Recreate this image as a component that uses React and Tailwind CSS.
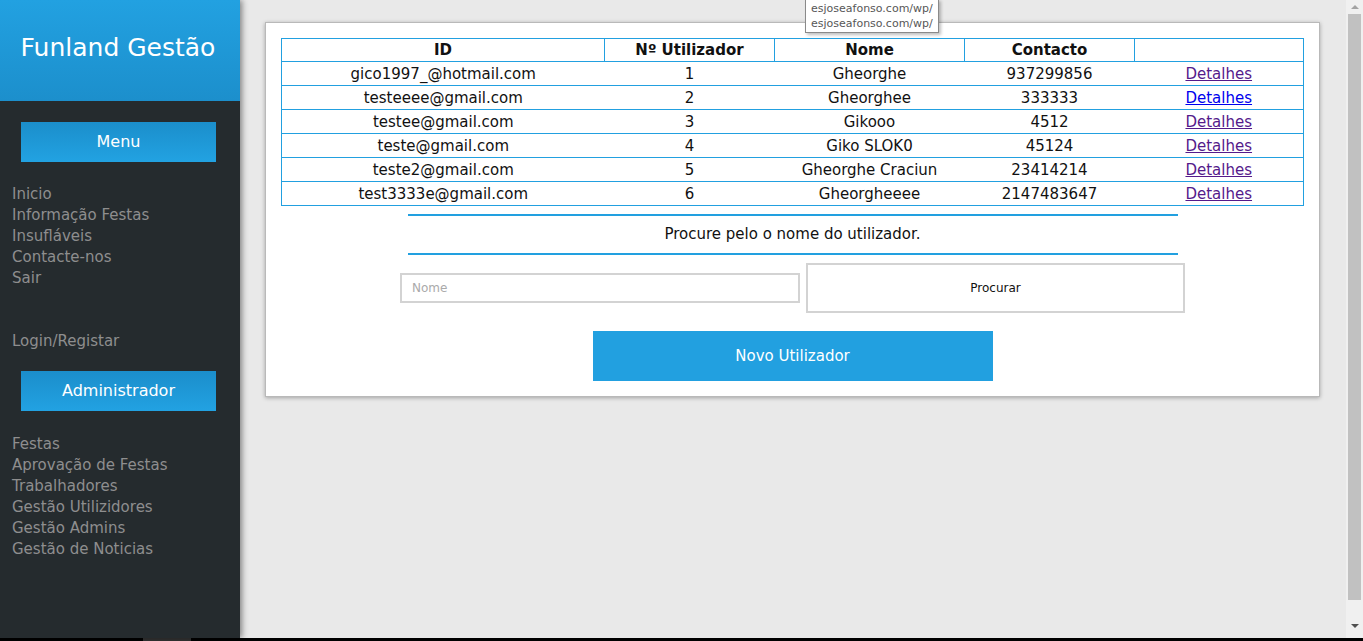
const menuLinks = ["Inicio", "Informação Festas", "Insufláveis", "Contacte-nos", "Sair"];
const adminLinks = [
  "Festas",
  "Aprovação de Festas",
  "Trabalhadores",
  "Gestão Utilizidores",
  "Gestão Admins",
  "Gestão de Noticias",
];

const users = [
  { id: "gico1997_@hotmail.com", num: 1, nome: "Gheorghe", contacto: "937299856", visited: true },
  { id: "testeeee@gmail.com", num: 2, nome: "Gheorghee", contacto: "333333", visited: false },
  { id: "testee@gmail.com", num: 3, nome: "Gikooo", contacto: "4512", visited: true },
  { id: "teste@gmail.com", num: 4, nome: "Giko SLOK0", contacto: "45124", visited: true },
  { id: "teste2@gmail.com", num: 5, nome: "Gheorghe Craciun", contacto: "23414214", visited: true },
  { id: "test3333e@gmail.com", num: 6, nome: "Gheorgheeee", contacto: "2147483647", visited: true },
];

const font = "font-['DejaVu_Sans',sans-serif]";

const SideButton = ({ children }) => (
  <div className="ml-[21px] flex h-[40px] w-[195px] items-center justify-center bg-gradient-to-b from-[#1b8ecb] to-[#22a2e2] text-[16px] text-white">
    {children}
  </div>
);

const Sidebar = () => (
  <aside className="relative z-10 flex w-[240px] shrink-0 flex-col bg-[#252b2e] shadow-[2px_0_6px_rgba(0,0,0,0.45)]">
    <div className="flex h-[101px] items-center justify-center bg-gradient-to-b from-[#22a1e1] to-[#1c8fcc] pb-[6px] pr-[4px] text-[25px] text-white">
      Funland Gestão
    </div>
    <div className="mt-[21px]">
      <SideButton>Menu</SideButton>
    </div>
    <nav className="mt-[22px] flex flex-col px-[12px] text-[15px] leading-[21px] text-[#8e8e8e]">
      {menuLinks.map((link) => (
        <span key={link}>{link}</span>
      ))}
      <span className="mt-[42px]">Login/Registar</span>
    </nav>
    <div className="mt-[19px]">
      <SideButton>Administrador</SideButton>
    </div>
    <nav className="mt-[23px] flex flex-col px-[12px] text-[15px] leading-[21px] text-[#8e8e8e]">
      {adminLinks.map((link) => (
        <span key={link}>{link}</span>
      ))}
    </nav>
  </aside>
);

const Scrollbar = () => (
  <div className="flex w-[17px] shrink-0 flex-col items-center bg-[#f0f0f0]">
    <div className="flex h-[14px] items-center justify-center">
      <div className="h-0 w-0 border-x-[4px] border-b-[4px] border-x-transparent border-b-[#a3a3a3]" />
    </div>
    <div className="h-[586px] w-[13px] bg-[#c1c1c1]" />
    <div className="flex flex-1 items-center justify-center pt-[14px]">
      <div className="h-0 w-0 border-x-[4px] border-t-[4px] border-x-transparent border-t-[#505050]" />
    </div>
  </div>
);

const App = () => (
  <div className={`flex h-[641px] w-[1363px] flex-col overflow-hidden ${font}`}>
    <div className="flex h-[638px]">
      <Sidebar />
      <main className="relative flex-1 bg-[#e9e9e9] pl-[25px] pr-[26px] pt-[22px]">
        <div className="border border-[#b9b9b9] bg-white p-[15px] shadow-[0_1px_4px_rgba(0,0,0,0.3)]">
          <table className="w-full border-collapse border border-[#22a0e0] text-[15px] leading-[20px] text-[#111]">
            <thead>
              <tr className="h-[23px]">
                <th className="w-[323px] border border-[#22a0e0] p-0 font-bold">ID</th>
                <th className="w-[170px] border border-[#22a0e0] p-0 font-bold">Nº Utilizador</th>
                <th className="w-[190px] border border-[#22a0e0] p-0 font-bold">Nome</th>
                <th className="w-[170px] border border-[#22a0e0] p-0 font-bold">Contacto</th>
                <th className="border border-[#22a0e0] p-0"></th>
              </tr>
            </thead>
            <tbody>
              {users.map((user) => (
                <tr key={user.num} className="h-[24px] border-t border-[#22a0e0] text-center">
                  <td>{user.id}</td>
                  <td>{user.num}</td>
                  <td>{user.nome}</td>
                  <td>{user.contacto}</td>
                  <td>
                    <a
                      href="#"
                      className={`underline ${user.visited ? "text-[#551a8b]" : "text-[#0000ee]"}`}
                    >
                      Detalhes
                    </a>
                  </td>
                </tr>
              ))}
            </tbody>
          </table>

          <div className="mt-[8px] flex flex-col items-center">
            <div className="flex h-[41px] w-[770px] items-center justify-center border-y-2 border-[#22a0e0] text-[15px] text-[#111]">
              Procure pelo o nome do utilizador.
            </div>
            <div className="mt-[8px] flex items-center gap-[6px]">
              <input
                placeholder="Nome"
                className="h-[30px] w-[400px] border-2 border-[#d3d3d3] px-[10px] text-[12px] placeholder:text-[#aaaaaa] outline-none"
              />
              <button
                type="button"
                className="h-[50px] w-[379px] border-2 border-[#d3d3d3] bg-white text-[12px] text-[#111]"
              >
                Procurar
              </button>
            </div>
            <button
              type="button"
              className="mt-[18px] h-[50px] w-[400px] bg-[#22a0e0] text-[15px] text-white"
            >
              Novo Utilizador
            </button>
          </div>
        </div>

        <div className="absolute left-[565px] top-[-1px] border border-[#8a8a8a] bg-white px-[5px] py-[1px] text-[11px] leading-[15px] text-[#575757] shadow-[2px_2px_3px_rgba(0,0,0,0.25)]">
          <div>esjoseafonso.com/wp/</div>
          <div>esjoseafonso.com/wp/</div>
        </div>
      </main>
      <Scrollbar />
    </div>
    <div className="flex h-[3px] bg-black">
      <div className="ml-[143px] w-[48px] bg-[#333]" />
    </div>
  </div>
);

export default App;
